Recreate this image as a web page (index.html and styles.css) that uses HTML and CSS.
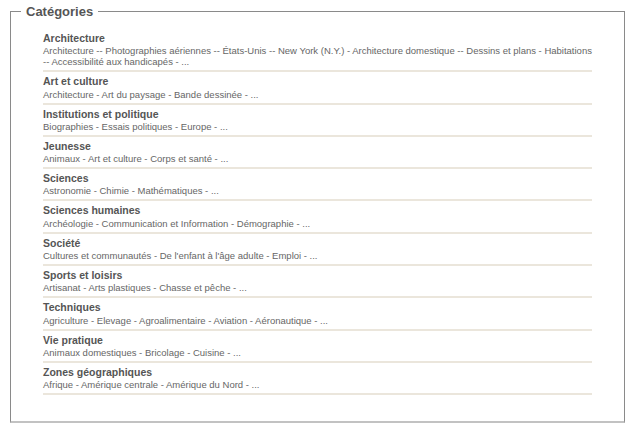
FILE: index.html
```html
<!DOCTYPE html>
<html lang="fr">
<head>
<meta charset="utf-8">
<title>Catégories</title>
<link rel="stylesheet" href="styles.css">
</head>
<body>
<fieldset class="cats">
  <legend class="cats-title">Catégories</legend>
  <ul class="cat-list">
    <li class="cat">
      <div class="cat-name">Architecture</div>
      <div class="cat-subs">Architecture -- Photographies aériennes -- États-Unis -- New York (N.Y.) - Architecture domestique -- Dessins et plans - Habitations -- Accessibilité aux handicapés - ...</div>
    </li>
    <li class="cat">
      <div class="cat-name">Art et culture</div>
      <div class="cat-subs">Architecture - Art du paysage - Bande dessinée - ...</div>
    </li>
    <li class="cat">
      <div class="cat-name">Institutions et politique</div>
      <div class="cat-subs">Biographies - Essais politiques - Europe - ...</div>
    </li>
    <li class="cat">
      <div class="cat-name">Jeunesse</div>
      <div class="cat-subs">Animaux - Art et culture - Corps et santé - ...</div>
    </li>
    <li class="cat">
      <div class="cat-name">Sciences</div>
      <div class="cat-subs">Astronomie - Chimie - Mathématiques - ...</div>
    </li>
    <li class="cat">
      <div class="cat-name">Sciences humaines</div>
      <div class="cat-subs">Archéologie - Communication et Information - Démographie - ...</div>
    </li>
    <li class="cat">
      <div class="cat-name">Société</div>
      <div class="cat-subs">Cultures et communautés - De l'enfant à l'âge adulte - Emploi - ...</div>
    </li>
    <li class="cat">
      <div class="cat-name">Sports et loisirs</div>
      <div class="cat-subs">Artisanat - Arts plastiques - Chasse et pêche - ...</div>
    </li>
    <li class="cat">
      <div class="cat-name">Techniques</div>
      <div class="cat-subs">Agriculture - Elevage - Agroalimentaire - Aviation - Aéronautique - ...</div>
    </li>
    <li class="cat">
      <div class="cat-name">Vie pratique</div>
      <div class="cat-subs">Animaux domestiques - Bricolage - Cuisine - ...</div>
    </li>
    <li class="cat">
      <div class="cat-name">Zones géographiques</div>
      <div class="cat-subs">Afrique - Amérique centrale - Amérique du Nord - ...</div>
    </li>
  </ul>
</fieldset>
</body>
</html>
```

FILE: styles.css
```css
html, body {
  margin: 0;
  padding: 0;
  background: #fff;
}

body {
  font-family: "Liberation Sans", Arial, sans-serif;
  color: #555;
}

.cats {
  margin: 4px 5px 5px 10px;
  padding: 10px 32px 26px 32px;
  border: 1px solid #8a8a8a;
  border-bottom: 2px solid #c2c2c2;
  min-width: 0;
}

.cats-title {
  margin-left: -22px;
  padding: 0 5px;
  font-size: 13px;
  line-height: 15px;
  font-weight: bold;
  color: #555;
}

.cat-list {
  list-style: none;
  margin: 0;
  padding: 0;
}

.cat {
  padding: 3px 0 3px;
  border-bottom: 2px solid #ebe6dc;
}

.cat-name {
  font-size: 10.5px;
  line-height: 13.3px;
  font-weight: bold;
  color: #555;
}

.cat-subs {
  font-size: 9.5px;
  line-height: 11px;
  color: #666;
}
```
